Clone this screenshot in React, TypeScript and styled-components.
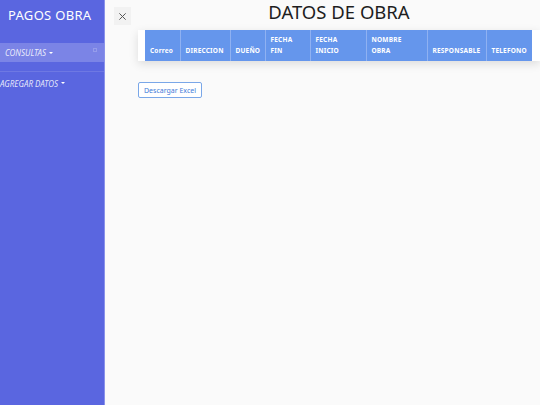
import React from "react";
import styled, { createGlobalStyle } from "styled-components";

const GlobalStyle = createGlobalStyle`
  html, body {
    margin: 0;
    padding: 0;
    background: #fafafa;
    font-family: "Noto Sans", "Open Sans", sans-serif;
  }
`;

const Layout = styled.div`
  display: flex;
  width: 540px;
  height: 405px;
  overflow: hidden;
`;

// sidebar
const Sidebar = styled.aside`
  width: 105px;
  flex-shrink: 0;
  background: #5a66e0;
  border-right: 1px solid #8a92ea;
  box-sizing: border-box;
  color: #fff;
`;

const Brand = styled.div`
  height: 31px;
  padding: 6px 0 0 8px;
  box-sizing: border-box;
  font-size: 13px;
  font-weight: 400;
  letter-spacing: 0.3px;
`;

const NavList = styled.nav`
  margin-top: 12px;
  display: flex;
  flex-direction: column;
`;

const NavItem = styled.div<{ $active?: boolean; $indent?: number }>`
  position: relative;
  height: ${({ $active }) => ($active ? "19px" : "22px")};
  display: flex;
  align-items: center;
  padding-left: ${({ $indent }) => $indent ?? 0}px;
  font-size: 8px;
  font-style: italic;
  color: rgba(255, 255, 255, 0.85);
  background: ${({ $active }) => ($active ? "rgba(255,255,255,0.2)" : "transparent")};
`;

const Caret = styled.span`
  margin-left: 3px;
  width: 0;
  height: 0;
  border-left: 2.5px solid transparent;
  border-right: 2.5px solid transparent;
  border-top: 2.5px solid #fff;
`;

const Dot = styled.span`
  position: absolute;
  right: 7px;
  top: 5px;
  width: 2px;
  height: 2px;
  border: 1px solid rgba(255, 255, 255, 0.2);
`;

const Divider = styled.div`
  height: 1px;
  margin-top: 9px;
  background: rgba(255, 255, 255, 0.12);
`;

// main area
const Main = styled.main`
  flex: 1;
  display: flex;
`;

const CloseCol = styled.div`
  width: 33px;
  flex-shrink: 0;
  padding: 7px 0 0 9px;
  box-sizing: border-box;
`;

const CloseButton = styled.button`
  width: 17px;
  height: 18px;
  padding: 0;
  border: none;
  background: #f2f2f2;
  display: flex;
  align-items: center;
  justify-content: center;
`;

const Content = styled.section`
  flex: 1;
  min-width: 0;
`;

const Title = styled.h1`
  margin: 0;
  padding-top: 2px;
  height: 30px;
  box-sizing: border-box;
  line-height: 20px;
  text-align: center;
  font-size: 18.5px;
  font-weight: 400;
  color: #1e1e1e;
`;

const Card = styled.div`
  background: #fff;
  padding: 0 7px;
  box-shadow: 0 3px 9px rgba(0, 0, 0, 0.12);
`;

const Table = styled.table`
  width: 387px;
  border-collapse: collapse;
  table-layout: fixed;
`;

const Th = styled.th<{ $w: number }>`
  width: ${({ $w }) => $w}px;
  height: 31px;
  background: #6596ec;
  color: #fff;
  font-size: 6.5px;
  font-weight: 700;
  letter-spacing: 0.2px;
  text-align: left;
  vertical-align: bottom;
  line-height: 11px;
  white-space: pre-line;
  padding: 0 5px 5px 5px;
  border-left: 1px solid #8fb1f2;
  box-sizing: border-box;
  &:first-child {
    border-left: none;
  }
`;

const ExcelButton = styled.button`
  margin-top: 21px;
  height: 16px;
  padding: 0 5px;
  border: 1px solid #7aa7e8;
  border-radius: 2px;
  background: #fff;
  color: #3f7bd8;
  font-family: inherit;
  font-size: 7px;
  cursor: pointer;
`;

const columns: [string, number][] = [
  ["Correo", 35],
  ["DIRECCION", 50],
  ["DUEÑO", 35],
  ["FECHA\nFIN", 45],
  ["FECHA\nINICIO", 56],
  ["NOMBRE\nOBRA", 61],
  ["RESPONSABLE", 59],
  ["TELEFONO", 46],
];

const App = () => {
  return (
    <>
      <GlobalStyle />
      <Layout>
        <Sidebar>
          <Brand>PAGOS OBRA</Brand>
          <NavList>
            <NavItem $active $indent={5}>
              CONSULTAS <Caret />
              <Dot />
            </NavItem>
            <Divider />
            <NavItem>
              AGREGAR DATOS <Caret />
            </NavItem>
          </NavList>
        </Sidebar>
        <Main>
          <CloseCol>
            <CloseButton>
              <svg width="9" height="9" viewBox="0 0 10 10">
                <path d="M1.5 1.5 L8.5 8.5 M8.5 1.5 L1.5 8.5" stroke="#555" strokeWidth="1.1" />
              </svg>
            </CloseButton>
          </CloseCol>
          <Content>
            <Title>DATOS DE OBRA</Title>
            <Card>
              <Table>
                <thead>
                  <tr>
                    {columns.map(([label, w]) => (
                      <Th key={label} $w={w}>
                        {label}
                      </Th>
                    ))}
                  </tr>
                </thead>
              </Table>
            </Card>
            <ExcelButton>Descargar Excel</ExcelButton>
          </Content>
        </Main>
      </Layout>
    </>
  );
};

export default App;
